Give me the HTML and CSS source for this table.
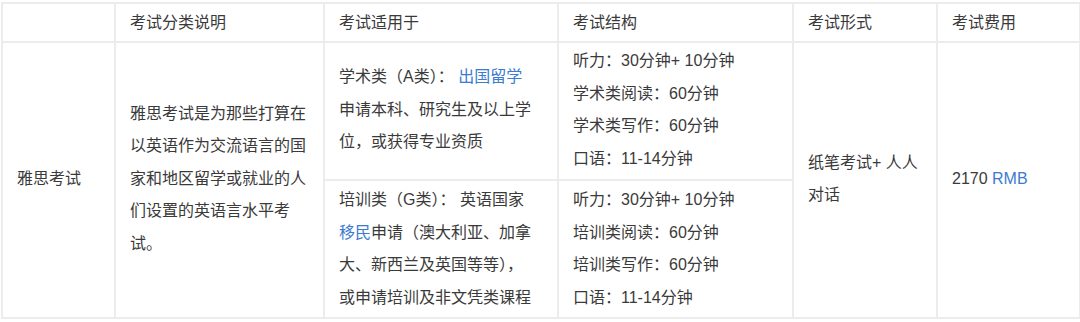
FILE: index.html
```html
<!DOCTYPE html>
<html lang="zh-CN">
<head>
<meta charset="utf-8">
<title>雅思考试</title>
<link rel="stylesheet" href="styles.css">
</head>
<body>
<table class="exam">
  <colgroup>
    <col class="c0"><col class="c1"><col class="c2"><col class="c3"><col class="c4"><col class="c5">
  </colgroup>
  <thead>
    <tr class="head">
      <th></th>
      <th>考试分类说明</th>
      <th>考试适用于</th>
      <th>考试结构</th>
      <th>考试形式</th>
      <th>考试费用</th>
    </tr>
  </thead>
  <tbody>
    <tr class="row-a">
      <td rowspan="2">雅思考试</td>
      <td rowspan="2">雅思考试是为那些打算在以英语作为交流语言的国家和地区留学或就业的人们设置的英语言水平考试。</td>
      <td>学术类（A类）： <a class="lnk">出国留学</a><br>申请本科、研究生及以上学<br>位，或获得专业资质</td>
      <td>听力：30分钟+ 10分钟<br>学术类阅读：60分钟<br>学术类写作：60分钟<br>口语：11-14分钟</td>
      <td rowspan="2">纸笔考试+ 人人<br>对话</td>
      <td rowspan="2">2170 <a class="lnk">RMB</a></td>
    </tr>
    <tr class="row-g">
      <td>培训类（G类）： 英语国家<br><a class="lnk">移民</a>申请（澳大利亚、加拿<br>大、新西兰及英国等等），<br>或申请培训及非文凭类课程</td>
      <td>听力：30分钟+ 10分钟<br>培训类阅读：60分钟<br>培训类写作：60分钟<br>口语：11-14分钟</td>
    </tr>
  </tbody>
</table>
</body>
</html>
```

FILE: styles.css
```css
html, body {
  margin: 0;
  padding: 0;
  background: #ffffff;
}

body {
  padding: 2px 0 0 1px;
  font-family: "Liberation Sans", "Noto Sans CJK SC", sans-serif;
  font-size: 16px;
  color: #3a3a3a;
}

.exam {
  border-collapse: collapse;
  table-layout: fixed;
  width: 1078px;
}

.c0 { width: 113px; }
.c1 { width: 209px; }
.c2 { width: 234px; }
.c3 { width: 235px; }
.c4 { width: 144px; }
.c5 { width: 143px; }

.exam th,
.exam td {
  border: 2px solid #ececec;
  padding: 2px 14px;
  line-height: 32.5px;
  vertical-align: middle;
  text-align: left;
  font-weight: normal;
}

.head th {
  height: 37px;
  padding-top: 0;
  padding-bottom: 0;
  line-height: 37px;
}

.row-a td {
  padding-top: 2px;
  padding-bottom: 4px;
}

.row-g td {
  padding-top: 3px;
  padding-bottom: 3px;
}

.lnk {
  color: #3b7bd0;
  text-decoration: none;
}
```
